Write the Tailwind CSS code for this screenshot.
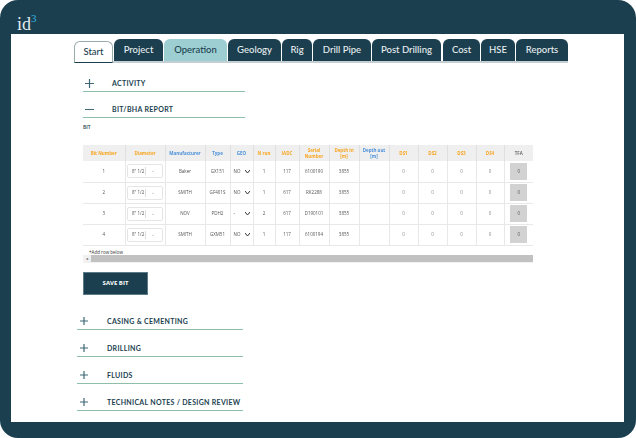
<!DOCTYPE html>
<html lang="en">
  <head>
    <meta charset="UTF-8" />
    <title>id3 Bit report</title>
    <script src="https://cdn.jsdelivr.net/npm/@tailwindcss/browser@4"></script>
  </head>
  <body class="bg-white font-['Open_Sans',sans-serif]">
    <div class="w-[636px] h-[438px] bg-[#1b3f4f] rounded-[18px] flex flex-col overflow-hidden">
      <!-- Header -->
      <div class="h-[34px] shrink-0 pl-[17px] pt-[14px] flex items-start">
        <span class="font-['Liberation_Serif',serif] text-[#e4ecef] text-[18px] leading-[20px]">id</span>
        <span class="font-['Liberation_Serif',serif] text-[#35b4e6] text-[11px] leading-[10px] -mt-[1px]">3</span>
      </div>

      <!-- Content -->
      <div class="ml-[11px] w-[613px] h-[388px] bg-white pt-[6px] text-[#1b3f4f]">
        <!-- Tabs -->
        <div class="ml-[63px] w-[494px] h-[23px] flex items-end gap-px border-b-2 border-[#c5cfd3] font-['Lato',sans-serif] text-[9.5px] font-medium">
          <div class="w-[39px] h-[22px] -mb-[2px] flex items-center justify-center rounded-t-[6px] border border-[#9aa] border-b-[#1b3f4f] bg-white">Start</div>
          <div class="w-[49px] h-[22px] flex items-center justify-center rounded-t-[6px] bg-[#1b3f4f] text-[#e8eef0]">Project</div>
          <div class="w-[63px] h-[22px] flex items-center justify-center rounded-t-[6px] bg-[#9dcfd2] text-[#1b3f4f]">Operation</div>
          <div class="w-[53px] h-[22px] flex items-center justify-center rounded-t-[6px] bg-[#1b3f4f] text-[#e8eef0]">Geology</div>
          <div class="w-[30px] h-[22px] flex items-center justify-center rounded-t-[6px] bg-[#1b3f4f] text-[#e8eef0]">Rig</div>
          <div class="w-[58px] h-[22px] flex items-center justify-center rounded-t-[6px] bg-[#1b3f4f] text-[#e8eef0]">Drill Pipe</div>
          <div class="w-[69px] h-[22px] flex items-center justify-center rounded-t-[6px] bg-[#1b3f4f] text-[#e8eef0]">Post Drilling</div>
          <div class="w-[37px] h-[22px] ml-px flex items-center justify-center rounded-t-[6px] bg-[#1b3f4f] text-[#e8eef0]">Cost</div>
          <div class="w-[34px] h-[22px] flex items-center justify-center rounded-t-[6px] bg-[#1b3f4f] text-[#e8eef0]">HSE</div>
          <div class="w-[52px] h-[22px] flex items-center justify-center rounded-t-[6px] bg-[#1b3f4f] text-[#e8eef0]">Reports</div>
        </div>

        <!-- Open sections -->
        <div class="ml-[72px] mt-[13px] w-[162px] h-[16px] flex items-center whitespace-nowrap border-b-[1.5px] border-[#8fbfa8] font-['Lato',sans-serif] text-[7px] font-bold tracking-[0.3px]">
          <svg class="w-[9px] h-[9px] shrink-0 ml-[2px] mr-[18px]" viewBox="0 0 9 9"><path d="M0 4.5H9M4.5 0V9" stroke="#3f6675" stroke-width="1.2"/></svg>ACTIVITY
        </div>
        <div class="ml-[72px] mt-[10px] w-[162px] h-[16px] flex items-center whitespace-nowrap border-b-[1.5px] border-[#8fbfa8] font-['Lato',sans-serif] text-[7px] font-bold tracking-[0.3px]">
          <svg class="w-[9px] h-[9px] shrink-0 ml-[2px] mr-[18px]" viewBox="0 0 9 9"><path d="M0 4.5H9" stroke="#3f6675" stroke-width="1.2"/></svg>BIT/BHA REPORT
        </div>
        <p class="ml-[72px] mt-[6px] text-[5px] leading-[6px] font-semibold">BIT</p>

        <!-- Bit table -->
        <table class="ml-[72px] mt-[15px] w-[450px] table-fixed border-collapse text-[4.5px] text-[#555] text-center blur-[0.25px]">
          <thead class="bg-[#efefef] text-[#f8a51e] font-bold leading-[6px]">
            <tr class="h-[16px]">
              <th class="w-[42px] border-r border-[#e0e0e0]">Bit Number</th>
              <th class="w-[40px] border-r border-[#e0e0e0]">Diameter</th>
              <th class="w-[40px] border-r border-[#e0e0e0] text-[#4a90d9]">Manufacturer</th>
              <th class="w-[25px] border-r border-[#e0e0e0] text-[#4a90d9]">Type</th>
              <th class="w-[23px] border-r border-[#e0e0e0] text-[#4a90d9]">GEO</th>
              <th class="w-[22px] border-r border-[#e0e0e0]">N run</th>
              <th class="w-[24px] border-r border-[#e0e0e0]">IADC</th>
              <th class="w-[30px] border-r border-[#e0e0e0]">Serial<br />Number</th>
              <th class="w-[30px] border-r border-[#e0e0e0]">Depth in<br />[m]</th>
              <th class="w-[30px] border-r border-[#e0e0e0] text-[#4a90d9]">Depth out<br />[m]</th>
              <th class="w-[29px] border-r border-[#e0e0e0]">DS1</th>
              <th class="w-[29px] border-r border-[#e0e0e0]">DS2</th>
              <th class="w-[29px] border-r border-[#e0e0e0]">DS3</th>
              <th class="w-[28px] border-r border-[#e0e0e0]">DS4</th>
              <th class="text-[#555] font-semibold">TFA</th>
            </tr>
          </thead>
          <tbody>
            <tr class="h-[21px] border-b border-[#e8e8e8]">
              <td class="border-r border-[#e8e8e8]">1</td>
              <td class="border-r border-[#e8e8e8]"><div class="mx-auto w-[36px] h-[14px] flex items-center justify-between rounded-[2px] border border-[#e5e5e5] pl-[4px] pr-[3px]">8" 1/2<span class="w-[14px] h-[8px] border-l border-[#ddd] text-[#aaa] text-[5px] leading-[7px]">⌄</span></div></td>
              <td class="border-r border-[#e8e8e8]">Baker</td>
              <td class="border-r border-[#e8e8e8]">GX151</td>
              <td class="border-r border-[#e8e8e8]"><div class="flex items-center justify-between px-[3px]">NO<svg class="w-[5px] h-[3px]" viewBox="0 0 5 3"><path d="M0 0L2.5 3L5 0" fill="none" stroke="#333" stroke-width="1"/></svg></div></td>
              <td class="border-r border-[#e8e8e8]">1</td>
              <td class="border-r border-[#e8e8e8]">117</td>
              <td class="border-r border-[#e8e8e8]">6100190</td>
              <td class="border-r border-[#e8e8e8]">3855</td>
              <td class="border-r border-[#e8e8e8]"></td>
              <td class="border-r border-[#e8e8e8] text-[#888]">0</td>
              <td class="border-r border-[#e8e8e8] text-[#888]">0</td>
              <td class="border-r border-[#e8e8e8] text-[#888]">0</td>
              <td class="border-r border-[#e8e8e8] text-[#888]">0</td>
              <td><div class="mx-auto w-[17px] h-[17px] bg-[#d2d2d2] flex items-center justify-center">0</div></td>
            </tr>
            <tr class="h-[21px] border-b border-[#e8e8e8]">
              <td class="border-r border-[#e8e8e8]">2</td>
              <td class="border-r border-[#e8e8e8]"><div class="mx-auto w-[36px] h-[14px] flex items-center justify-between rounded-[2px] border border-[#e5e5e5] pl-[4px] pr-[3px]">8" 1/2<span class="w-[14px] h-[8px] border-l border-[#ddd] text-[#aaa] text-[5px] leading-[7px]">⌄</span></div></td>
              <td class="border-r border-[#e8e8e8]">SMITH</td>
              <td class="border-r border-[#e8e8e8]">GF401S</td>
              <td class="border-r border-[#e8e8e8]"><div class="flex items-center justify-between px-[3px]">NO<svg class="w-[5px] h-[3px]" viewBox="0 0 5 3"><path d="M0 0L2.5 3L5 0" fill="none" stroke="#333" stroke-width="1"/></svg></div></td>
              <td class="border-r border-[#e8e8e8]">1</td>
              <td class="border-r border-[#e8e8e8]">617</td>
              <td class="border-r border-[#e8e8e8]">RK2288</td>
              <td class="border-r border-[#e8e8e8]">3855</td>
              <td class="border-r border-[#e8e8e8]"></td>
              <td class="border-r border-[#e8e8e8] text-[#888]">0</td>
              <td class="border-r border-[#e8e8e8] text-[#888]">0</td>
              <td class="border-r border-[#e8e8e8] text-[#888]">0</td>
              <td class="border-r border-[#e8e8e8] text-[#888]">0</td>
              <td><div class="mx-auto w-[17px] h-[17px] bg-[#d2d2d2] flex items-center justify-center">0</div></td>
            </tr>
            <tr class="h-[21px] border-b border-[#e8e8e8]">
              <td class="border-r border-[#e8e8e8]">3</td>
              <td class="border-r border-[#e8e8e8]"><div class="mx-auto w-[36px] h-[14px] flex items-center justify-between rounded-[2px] border border-[#e5e5e5] pl-[4px] pr-[3px]">8" 1/2<span class="w-[14px] h-[8px] border-l border-[#ddd] text-[#aaa] text-[5px] leading-[7px]">⌄</span></div></td>
              <td class="border-r border-[#e8e8e8]">NOV</td>
              <td class="border-r border-[#e8e8e8]">PDH2</td>
              <td class="border-r border-[#e8e8e8]"><div class="flex items-center justify-between px-[3px]">-<svg class="w-[5px] h-[3px]" viewBox="0 0 5 3"><path d="M0 0L2.5 3L5 0" fill="none" stroke="#333" stroke-width="1"/></svg></div></td>
              <td class="border-r border-[#e8e8e8]">2</td>
              <td class="border-r border-[#e8e8e8]">617</td>
              <td class="border-r border-[#e8e8e8]">D190101</td>
              <td class="border-r border-[#e8e8e8]">3855</td>
              <td class="border-r border-[#e8e8e8]"></td>
              <td class="border-r border-[#e8e8e8] text-[#888]">0</td>
              <td class="border-r border-[#e8e8e8] text-[#888]">0</td>
              <td class="border-r border-[#e8e8e8] text-[#888]">0</td>
              <td class="border-r border-[#e8e8e8] text-[#888]">0</td>
              <td><div class="mx-auto w-[17px] h-[17px] bg-[#d2d2d2] flex items-center justify-center">0</div></td>
            </tr>
            <tr class="h-[21px] border-b border-[#e8e8e8]">
              <td class="border-r border-[#e8e8e8]">4</td>
              <td class="border-r border-[#e8e8e8]"><div class="mx-auto w-[36px] h-[14px] flex items-center justify-between rounded-[2px] border border-[#e5e5e5] pl-[4px] pr-[3px]">8" 1/2<span class="w-[14px] h-[8px] border-l border-[#ddd] text-[#aaa] text-[5px] leading-[7px]">⌄</span></div></td>
              <td class="border-r border-[#e8e8e8]">SMITH</td>
              <td class="border-r border-[#e8e8e8]">GXM51</td>
              <td class="border-r border-[#e8e8e8]"><div class="flex items-center justify-between px-[3px]">NO<svg class="w-[5px] h-[3px]" viewBox="0 0 5 3"><path d="M0 0L2.5 3L5 0" fill="none" stroke="#333" stroke-width="1"/></svg></div></td>
              <td class="border-r border-[#e8e8e8]">1</td>
              <td class="border-r border-[#e8e8e8]">117</td>
              <td class="border-r border-[#e8e8e8]">6100194</td>
              <td class="border-r border-[#e8e8e8]">3855</td>
              <td class="border-r border-[#e8e8e8]"></td>
              <td class="border-r border-[#e8e8e8] text-[#888]">0</td>
              <td class="border-r border-[#e8e8e8] text-[#888]">0</td>
              <td class="border-r border-[#e8e8e8] text-[#888]">0</td>
              <td class="border-r border-[#e8e8e8] text-[#888]">0</td>
              <td><div class="mx-auto w-[17px] h-[17px] bg-[#d2d2d2] flex items-center justify-center">0</div></td>
            </tr>
          </tbody>
        </table>
        <p class="ml-[78px] mt-[3px] text-[4.5px] leading-[6px] text-[#333]">+Add row below</p>

        <!-- Scrollbar -->
        <div class="ml-[72px] w-[450px] h-[8px] bg-[#f1f1f1] flex items-center">
          <span class="w-[8px] text-[4px] text-center text-[#555]">◂</span>
          <div class="flex-1 h-[7px] bg-[#c1c1c1]"></div>
        </div>

        <button class="ml-[72px] mt-[9px] w-[65px] h-[23px] bg-[#1b3f4f] border border-[#5d7a87] text-white text-[6px] font-bold block">SAVE BIT</button>

        <!-- Collapsed sections -->
        <div class="ml-[66px] mt-[19px] w-[166px] h-[16px] flex items-center whitespace-nowrap border-b-[1.5px] border-[#8fbfa8] font-['Lato',sans-serif] text-[7px] font-bold tracking-[0.3px]">
          <svg class="w-[8px] h-[8px] shrink-0 ml-[3px] mr-[19px]" viewBox="0 0 8 8"><path d="M0 4H8M4 0V8" stroke="#3f6675" stroke-width="1.2"/></svg>CASING &amp; CEMENTING
        </div>
        <div class="ml-[66px] mt-[11px] w-[166px] h-[16px] flex items-center whitespace-nowrap border-b-[1.5px] border-[#8fbfa8] font-['Lato',sans-serif] text-[7px] font-bold tracking-[0.3px]">
          <svg class="w-[8px] h-[8px] shrink-0 ml-[3px] mr-[19px]" viewBox="0 0 8 8"><path d="M0 4H8M4 0V8" stroke="#3f6675" stroke-width="1.2"/></svg>DRILLING
        </div>
        <div class="ml-[66px] mt-[11px] w-[166px] h-[16px] flex items-center whitespace-nowrap border-b-[1.5px] border-[#8fbfa8] font-['Lato',sans-serif] text-[7px] font-bold tracking-[0.3px]">
          <svg class="w-[8px] h-[8px] shrink-0 ml-[3px] mr-[19px]" viewBox="0 0 8 8"><path d="M0 4H8M4 0V8" stroke="#3f6675" stroke-width="1.2"/></svg>FLUIDS
        </div>
        <div class="ml-[66px] mt-[11px] w-[166px] h-[16px] flex items-center whitespace-nowrap border-b-[1.5px] border-[#8fbfa8] font-['Lato',sans-serif] text-[7px] font-bold tracking-[0.3px]">
          <svg class="w-[8px] h-[8px] shrink-0 ml-[3px] mr-[19px]" viewBox="0 0 8 8"><path d="M0 4H8M4 0V8" stroke="#3f6675" stroke-width="1.2"/></svg>TECHNICAL NOTES / DESIGN REVIEW
        </div>
      </div>
    </div>
  </body>
</html>
